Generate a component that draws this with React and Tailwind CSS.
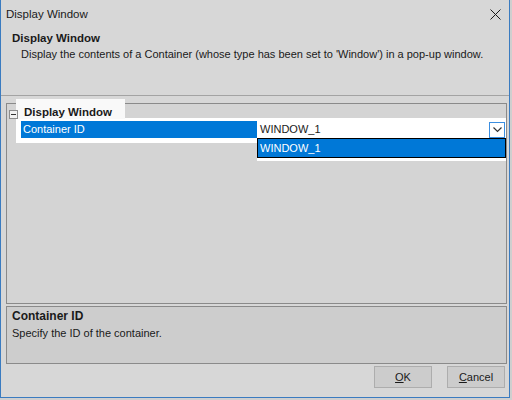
import { useState } from "react";

const font = { fontFamily: '"Liberation Sans", Arial, sans-serif' };

function CloseIcon() {
  return (
    <svg width="11" height="11" viewBox="0 0 11 11">
      <path d="M0.5 0.5 L10.5 10.5 M10.5 0.5 L0.5 10.5" stroke="#1a1a1a" strokeWidth="1" fill="none" />
    </svg>
  );
}

function Chevron() {
  return (
    <svg width="9" height="6" viewBox="0 0 9 6">
      <path d="M0.5 0.5 L4.5 4.5 L8.5 0.5" stroke="#333" strokeWidth="1.2" fill="none" />
    </svg>
  );
}

function Collapse() {
  return (
    <div className="relative z-20 flex h-[9px] w-[9px] items-center justify-center border border-[#8c8c8c] bg-[#f2f2f2]">
      <div className="h-px w-[5px] bg-[#333]" />
    </div>
  );
}

export default function App() {
  const [open] = useState(true);

  return (
    <div className="h-[400px] w-[512px] overflow-hidden bg-[#cfcfcf] text-[11px] text-[#1a1a1a]" style={font}>
      <div className="flex h-[398px] w-[510px] flex-col border-b border-l border-r border-[#3a7bc0] bg-[#d7d7d7]">
        {/* title bar */}
        <div className="flex h-[29px] shrink-0 items-center justify-between pl-[5px] pr-[8px]">
          <span className="text-[11.5px] leading-[15px]">Display Window</span>
          <CloseIcon />
        </div>

        {/* header */}
        <div className="h-[66px] shrink-0 pl-[11px] pt-[2px]">
          <div className="text-[11.5px] font-bold leading-[15px]">Display Window</div>
          <div className="mt-[1px] whitespace-nowrap pl-[9px] leading-[15px]">
            Display the contents of a Container (whose type has been set to 'Window') in a pop-up window.
          </div>
        </div>
        <div className="h-px shrink-0 bg-[#a3a3a3]" />

        {/* property grid */}
        <div className="ml-[5px] mt-[7px] h-[201px] w-[501px] shrink-0 border border-[#8a8a8a] bg-[#d4d4d4]">
          <div className="flex h-[14px] items-start">
            <div className="ml-[2px] mt-[6px]">
              <Collapse />
            </div>
            <div className="relative z-10 -mt-[5px] ml-[-2px] h-[20px] w-[109px] bg-[#f9f9f9] pl-[8px] pt-[6px] text-[11.5px] font-bold leading-[15px]">
              Display Window
            </div>
          </div>
          <div className="ml-[9px] bg-white pb-[5px] pl-[5px] pt-[3px]">
            <div className="flex h-[17px]">
              <div className="w-[236px] bg-[#0078d7] pl-[2px] leading-[17px] text-white">Container ID</div>
              <div className="relative flex flex-1 items-center justify-between pl-[3px]">
                <span className="leading-[17px]">WINDOW_1</span>
                <div className="mr-[1px] flex h-[16px] w-[16px] items-center justify-center border border-[#3b8ee0] bg-white">
                  <Chevron />
                </div>
                {open && (
                  <div className="absolute left-0 top-[17px] w-full bg-white pb-[3px]">
                    <div className="h-[20px] border border-black bg-[#0078d7] pl-[2px] leading-[18px] text-white">
                      WINDOW_1
                    </div>
                  </div>
                )}
              </div>
            </div>
          </div>
        </div>

        {/* description */}
        <div className="ml-[5px] mt-[2px] h-[58px] w-[501px] shrink-0 border border-[#8a8a8a] bg-[#cdcdcd] pl-[5px] pt-[1px]">
          <div className="text-[12px] font-bold leading-[16px]">Container ID</div>
          <div className="mt-[2px] leading-[15px]">Specify the ID of the container.</div>
        </div>

        {/* buttons */}
        <div className="mt-[2px] flex justify-end gap-[15px] pr-[4px]">
          <button className="h-[22px] w-[58px] border border-[#adadad] bg-[#cccccc] leading-[20px]">
            <span className="underline">O</span>K
          </button>
          <button className="h-[22px] w-[58px] border border-[#adadad] bg-[#cccccc] leading-[20px]">
            <span className="underline">C</span>ancel
          </button>
        </div>
      </div>
    </div>
  );
}
